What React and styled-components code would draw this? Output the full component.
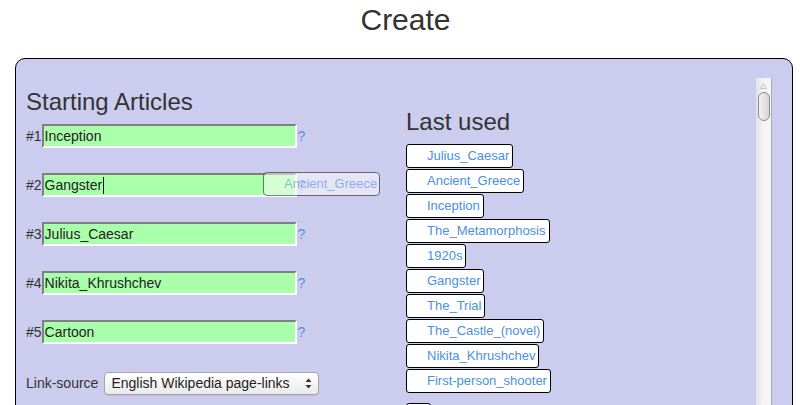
import React from 'react';
import styled, { createGlobalStyle } from 'styled-components';

const Global = createGlobalStyle`
  html, body { margin: 0; padding: 0; overflow: hidden; background: #fff; }
  body { font-family: "Liberation Sans", Arial, sans-serif; color: #333; }
`;

const Title = styled.h1`
  margin: 2px 0 20px;
  font-size: 30px;
  line-height: 36px;
  font-weight: normal;
  text-align: center;
  color: #333;
`;

const Panel = styled.section`
  margin-left: 15px;
  width: 778px;
  height: 520px;
  box-sizing: border-box;
  border: 1px solid #000;
  border-radius: 10px;
  background: #ccccee;
  display: flex;
`;

const Content = styled.div`
  flex: 1;
  display: grid;
  grid-template-columns: 380px 1fr;
  padding-left: 10px;
`;

const Column = styled.div`
  display: flex;
  flex-direction: column;
  align-items: flex-start;
  padding-top: ${p => p.$top}px;
`;

const Heading = styled.h2`
  margin: 0 0 8px;
  font-size: 24px;
  line-height: 28px;
  font-weight: normal;
  color: #333;
`;

const Row = styled.div`
  position: relative;
  display: flex;
  align-items: center;
  height: 24px;
  margin-bottom: 25px;
`;

const Label = styled.label`
  font-size: 14px;
  color: #333;
  margin-right: ${p => p.$gap || 0}px;
`;

const ArticleInput = styled.input`
  width: 255px;
  height: 24px;
  box-sizing: border-box;
  margin: 0;
  padding: 0 1px;
  border-style: solid;
  border-width: 2px;
  border-color: #808080 #ffffff #ffffff #808080;
  background: #aaffaa;
  font-family: "Liberation Sans", Arial, sans-serif;
  font-size: 14px;
  color: #222;
  outline: none;
`;

const Help = styled.a`
  font-size: 14px;
  color: #5b8fd8;
  margin-left: 1px;
  text-decoration: none;
  cursor: help;
`;

const Caret = styled.span`
  position: absolute;
  left: 77px;
  top: 4px;
  width: 1px;
  height: 17px;
  background: #111;
`;

const SourceRow = styled(Row)`
  margin-top: 2px;
`;

const SelectWrap = styled.div`
  position: relative;
  display: inline-flex;
`;

const Select = styled.select`
  appearance: none;
  -webkit-appearance: none;
  width: 215px;
  height: 23px;
  box-sizing: border-box;
  margin: 0;
  padding: 0 20px 0 6px;
  border: 1px solid #a4a4a4;
  border-radius: 4px;
  background: linear-gradient(#ffffff, #eaeaea);
  font-family: "Liberation Sans", Arial, sans-serif;
  font-size: 14px;
  color: #222;
  box-shadow: 0 1px 1px rgba(0,0,0,0.08);
`;

const SelectArrows = styled.svg`
  position: absolute;
  right: 7px;
  top: 6px;
  pointer-events: none;
`;

const ChipList = styled.div`
  display: flex;
  flex-direction: column;
  align-items: flex-start;
  gap: 1px;
`;

const Chip = styled.button`
  height: 24px;
  box-sizing: border-box;
  margin: 0;
  padding: 0 3px 0 20px;
  min-width: ${p => p.$min || 0}px;
  border: 1px solid #000;
  border-radius: 3px;
  background: #fff;
  font-family: "Liberation Sans", Arial, sans-serif;
  font-size: 13px;
  line-height: 22px;
  color: #4a8fe0;
  text-align: left;
  white-space: nowrap;
  cursor: move;
  opacity: ${p => (p.$ghost ? 0.5 : 1)};
  margin-top: ${p => p.$gapTop || 0}px;
`;

const Ghost = styled(Chip)`
  position: absolute;
  left: 237px;
  top: -1px;
  padding-right: 2px;
  border-radius: 4px;
`;

const Scrollbar = styled.div`
  width: 16px;
  margin: 19px 20px 0 0;
  box-sizing: border-box;
  border-right: 1px solid #aaa;
  background: linear-gradient(to right, #e2e2e2, #f4f4f4 45%, #f7f7f7);
  display: flex;
  flex-direction: column;
  align-items: center;
`;

const ScrollArrow = styled.svg`
  margin-top: 5px;
`;

const Thumb = styled.div`
  margin-top: 3px;
  width: 12px;
  height: 29px;
  box-sizing: border-box;
  border: 1px solid #8a8a8a;
  border-radius: 6px;
  background: linear-gradient(to right, #f2f2f2, #d6d6d6);
`;

const articles = ['Inception', 'Gangster', 'Julius_Caesar', 'Nikita_Khrushchev', 'Cartoon'];
const lastUsed = [
  'Julius_Caesar', 'Ancient_Greece', 'Inception', 'The_Metamorphosis', '1920s',
  'Gangster', 'The_Trial', 'The_Castle_(novel)', 'Nikita_Khrushchev', 'First-person_shooter',
];

export default function App() {
  return (
    <>
      <Global />
      <Title>Create</Title>
      <Panel>
        <Content>
          <Column $top={29}>
            <Heading>Starting Articles</Heading>
            {articles.map((a, i) => (
              <Row key={a}>
                <Label>#{i + 1}</Label>
                <ArticleInput defaultValue={a} />
                <Help>?</Help>
                {i === 1 && <Caret />}
                {i === 1 && <Ghost as="div" $ghost>Ancient_Greece</Ghost>}
              </Row>
            ))}
            <SourceRow>
              <Label $gap={6}>Link-source</Label>
              <SelectWrap>
                <Select defaultValue="en">
                  <option value="en">English Wikipedia page-links</option>
                </Select>
                <SelectArrows width="7" height="11" viewBox="0 0 7 11">
                  <path d="M3.5 0.5 L6.5 4 L0.5 4 Z" fill="#333" />
                  <path d="M3.5 10.5 L6.5 7 L0.5 7 Z" fill="#333" />
                </SelectArrows>
              </SelectWrap>
            </SourceRow>
          </Column>
          <Column $top={49}>
            <Heading>Last used</Heading>
            <ChipList>
              {lastUsed.map(a => (
                <Chip key={a}>{a}</Chip>
              ))}
              <Chip $min={22} $gapTop={9} />
            </ChipList>
          </Column>
        </Content>
        <Scrollbar>
          <ScrollArrow width="7" height="6" viewBox="0 0 7 6">
            <path d="M3.5 0.5 L6.5 5.5 L0.5 5.5 Z" fill="none" stroke="#c4c4c4" strokeWidth="1" />
          </ScrollArrow>
          <Thumb />
        </Scrollbar>
      </Panel>
    </>
  );
}
